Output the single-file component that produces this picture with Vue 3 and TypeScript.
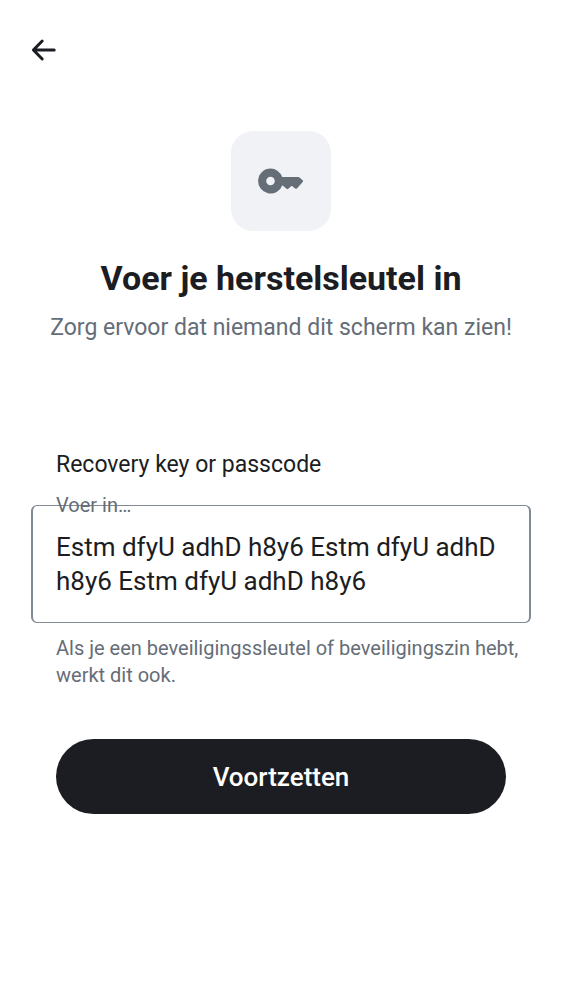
<script setup lang="ts">
import { ref } from 'vue'

const recoveryKey = ref('Estm dfyU adhD h8y6 Estm dfyU adhD h8y6 Estm dfyU adhD h8y6')
</script>

<template>
  <div class="screen">
    <header class="top-bar">
      <button class="back" type="button" aria-label="Terug">
        <svg width="26" height="24" viewBox="0 0 26 24" aria-hidden="true">
          <path d="M23.2 12H2.500M11.200 3L2.400 12L11.200 21" />
        </svg>
      </button>
    </header>

    <main>
      <section class="intro">
        <div class="badge">
          <svg width="46" height="26" viewBox="0 0 46 26" aria-hidden="true">
            <path
              fill-rule="evenodd"
              d="M12.5 .5a12.5 12.5 0 0 1 11.700 8.500H40q.9 0 1.500.6L44.700 12.300q.8.800 0 1.600L38.900 20.400q-.9.900-1.800 0L33.700 17.800 30.300 20.700q-.9.600-1.800 0L24.400 17.200A12.500 12.500 0 1 1 12.500.500ZM12.500 8.700a4.300 4.300 0 1 0 0 8.600a4.300 4.300 0 0 0 0-8.600Z"
            />
          </svg>
        </div>
        <h1>Voer je herstelsleutel in</h1>
        <p>Zorg ervoor dat niemand dit scherm kan zien!</p>
      </section>

      <form class="form" @submit.prevent>
        <label class="title" for="recovery-key">Recovery key or passcode</label>
        <div class="field">
          <label class="floating" for="recovery-key">Voer in…</label>
          <textarea id="recovery-key" v-model="recoveryKey" rows="2" spellcheck="false" aria-describedby="hint"></textarea>
        </div>
        <p id="hint" class="hint">Als je een beveiligingssleutel of beveiligingszin hebt, werkt dit ook.</p>
        <button class="submit" type="submit">Voortzetten</button>
      </form>
    </main>
  </div>
</template>

<style>
body {
  background: #fff;
}
</style>

<style scoped>
.screen {
  box-sizing: border-box;
  min-height: 100vh;
  padding: 0 31px 32px;
  background: #fff;
  color: #1b1d22;
  font-family: Roboto, "Liberation Sans", sans-serif;
}

.top-bar {
  display: flex;
  align-items: center;
  height: 100px;
}

.back {
  display: flex;
  padding: 0;
  border: 0;
  background: none;
  cursor: pointer;
}

.back path {
  fill: none;
  stroke: #1b1d22;
  stroke-width: 3;
  stroke-linecap: round;
  stroke-linejoin: round;
}

.intro {
  display: flex;
  flex-direction: column;
  align-items: center;
  padding-top: 31px;
  text-align: center;
}

.badge {
  display: flex;
  align-items: center;
  justify-content: center;
  width: 100px;
  height: 100px;
  border-radius: 22px;
  background: #f0f2f5;
}

.badge path {
  fill: #656d77;
}

h1 {
  margin: 25px 0 0;
  font-size: 34px;
  line-height: 44px;
  font-weight: 700;
}

.intro p {
  margin: 12px 0 0;
  color: #656d77;
  font-size: 23px;
  line-height: 32px;
}

.form {
  margin-top: 104px;
}

.title {
  display: block;
  margin: 0 25px 23px;
  font-size: 23px;
  line-height: 34px;
}

.field {
  position: relative;
  padding: 24px 23px 22px;
  border: solid #818a95;
  border-width: 1px 2px;
  border-radius: 6px;
}

.floating {
  position: absolute;
  top: -14px;
  left: 23px;
  color: #656d77;
  font-size: 20px;
  line-height: 26px;
}

textarea {
  display: block;
  box-sizing: border-box;
  width: 100%;
  height: 70px;
  padding: 0;
  border: 0;
  outline: 0;
  resize: none;
  overflow: hidden;
  background: transparent;
  color: inherit;
  font-family: inherit;
  font-size: 26px;
  line-height: 34px;
}

.hint {
  margin: 12px 0 0 25px;
  color: #656d77;
  font-size: 20px;
  line-height: 27px;
}

.submit {
  display: block;
  width: calc(100% - 50px);
  height: 75px;
  margin: 50px auto 0;
  border: 0;
  border-radius: 38px;
  background: #1b1d22;
  color: #fff;
  font-family: inherit;
  font-size: 26px;
  font-weight: 500;
  cursor: pointer;
}
</style>
